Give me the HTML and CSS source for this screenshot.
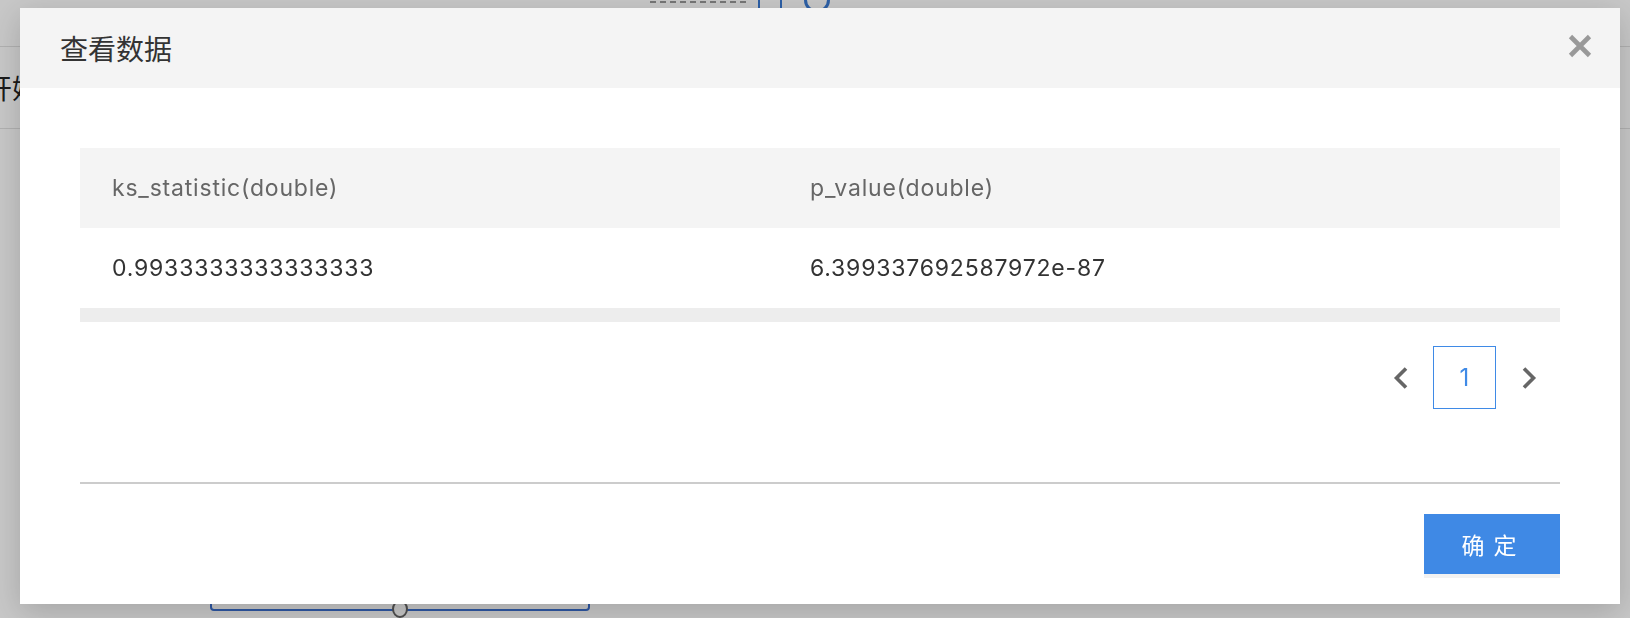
FILE: index.html
```html
<!DOCTYPE html>
<html lang="zh-CN">
<head>
  <meta charset="UTF-8" />
  <title>查看数据</title>
  <link rel="stylesheet" href="styles.css">
</head>
<body>
  <!-- page behind the dialog -->
  <div class="page">
    <div class="toolbar">
      <span class="dashes"></span>
      <span class="tool-square"></span>
      <span class="tool-circle"></span>
    </div>
    <div class="row-line">
      <span class="row-label">开始</span>
    </div>
    <div class="slider">
      <span class="slider-handle"></span>
    </div>
  </div>

  <div class="mask">
    <div class="modal">
      <div class="modal-header">
        <span class="modal-title">查看数据</span>
        <button class="modal-close" title="关闭">
          <svg width="24" height="24" viewBox="0 0 24 24">
            <path d="M2.5 2.5 L21.5 21.5 M21.5 2.5 L2.5 21.5" stroke="#999" stroke-width="4.6" fill="none" />
          </svg>
        </button>
      </div>

      <div class="modal-body">
        <table class="data-table">
          <thead>
            <tr>
              <th>ks_statistic(double)</th>
              <th>p_value(double)</th>
            </tr>
          </thead>
          <tbody id="data-rows"></tbody>
        </table>
        <div class="scroll-bar"></div>

        <div class="pager">
          <button class="pager-arrow">
            <svg width="16" height="24" viewBox="0 0 16 24">
              <polyline points="13,2.5 3.5,12 13,21.5" stroke="#666" stroke-width="3.6" fill="none" />
            </svg>
          </button>
          <button class="pager-num active">1</button>
          <button class="pager-arrow">
            <svg width="16" height="24" viewBox="0 0 16 24">
              <polyline points="3,2.5 12.5,12 3,21.5" stroke="#666" stroke-width="3.6" fill="none" />
            </svg>
          </button>
        </div>
      </div>

      <div class="modal-footer">
        <button class="btn-ok">确定</button>
      </div>
    </div>
  </div>

  <script>
    const rows = [
      { ks: '0.9933333333333333', p: '6.399337692587972e-87' }
    ];
    const tbody = document.getElementById('data-rows');
    rows.forEach(r => {
      const tr = document.createElement('tr');
      tr.innerHTML = `<td>${r.ks}</td><td>${r.p}</td>`;
      tbody.appendChild(tr);
    });
  </script>
</body>
</html>
```

FILE: styles.css
```css
body {
  margin: 0;
  font-family: Inter, "Noto Sans CJK SC", sans-serif;
  background-color: #fff;
  overflow: hidden;
}
.page {
  height: 618px;
}
.toolbar {
  height: 46px;
  border-bottom: 1px solid #e2e2e2;
  display: flex;
  align-items: flex-start;
  padding-left: 650px;
  gap: 12px;
}
.dashes {
  width: 96px;
  height: 4px;
  margin-top: 1px;
  border-top: 2px dashed #999;
}
.tool-square {
  width: 20px;
  height: 20px;
  margin-top: -12px;
  border: 2px solid #3a7bd5;
  border-radius: 2px;
}
.tool-circle {
  width: 20px;
  height: 20px;
  margin-top: -13px;
  margin-left: 10px;
  border: 3px solid #3a7bd5;
  border-radius: 50%;
}
.row-line {
  height: 81px;
  border-bottom: 1px solid #e2e2e2;
  display: flex;
  align-items: center;
}
.row-label {
  margin-left: -15px;
  font-size: 27px;
  color: #222;
}
.slider {
  position: relative;
  margin: 432px 0 0 210px;
  width: 376px;
  height: 46px;
  border: 2px solid #3a6fd0;
  border-radius: 4px;
}
.slider-handle {
  position: absolute;
  left: 180px;
  bottom: -9px;
  width: 12px;
  height: 14px;
  border: 2px solid #666;
  border-radius: 50%;
  background: #fff;
}

/* dialog */
.mask {
  position: fixed;
  inset: 0;
  background-color: rgba(0, 0, 0, 0.22);
  padding: 8px 0 0 20px;
}
.modal {
  width: 1600px;
  height: 596px;
  background-color: #fff;
  box-shadow: 0 8px 30px rgba(0, 0, 0, 0.18);
  display: flex;
  flex-direction: column;
}
.modal-header {
  height: 80px;
  flex-shrink: 0;
  background-color: #f4f4f4;
  display: flex;
  align-items: center;
  justify-content: space-between;
  padding: 0 28px 0 40px;
}
.modal-title {
  font-size: 28px;
  color: #333;
  font-family: "Noto Sans CJK SC", sans-serif;
}
.modal-close {
  border: none;
  background: none;
  padding: 0;
  width: 24px;
  height: 24px;
  cursor: pointer;
  margin-top: -4px;
}
.modal-body {
  padding: 60px 60px 0;
}
.data-table {
  width: 100%;
  border-collapse: collapse;
}
.data-table th,
.data-table td {
  height: 80px;
  padding: 0 32px;
  text-align: left;
  font-size: 23px;
  letter-spacing: 0.8px;
  font-weight: normal;
}
.data-table th:first-child {
  width: 634px;
}
.data-table th {
  background-color: #f4f4f4;
  color: #666;
}
.data-table td {
  color: #333;
}
.scroll-bar {
  height: 14px;
  background-color: #ededed;
}
.pager {
  margin-top: 24px;
  display: flex;
  justify-content: flex-end;
  gap: 1px;
}
.pager button {
  width: 63px;
  height: 63px;
  padding: 0;
  border: none;
  background: none;
  cursor: pointer;
  display: flex;
  align-items: center;
  justify-content: center;
}
.pager-num {
  font-family: Inter, sans-serif;
  font-size: 24px;
  color: #3f8ae6;
}
.pager button.active {
  border: 1.5px solid #3f8ae6;
}
.modal-footer {
  margin: 73px 60px 0;
  border-top: 2px solid #cccccc;
  padding-top: 30px;
  display: flex;
  justify-content: flex-end;
}
.btn-ok {
  width: 136px;
  height: 60px;
  border: none;
  background-color: #3f89e5;
  box-shadow: 0 4px 0 #f2f2f2;
  color: #fff;
  font-family: "Noto Sans CJK SC", sans-serif;
  font-size: 23px;
  letter-spacing: 9px;
  padding-left: 9px;
  cursor: pointer;
}
```
